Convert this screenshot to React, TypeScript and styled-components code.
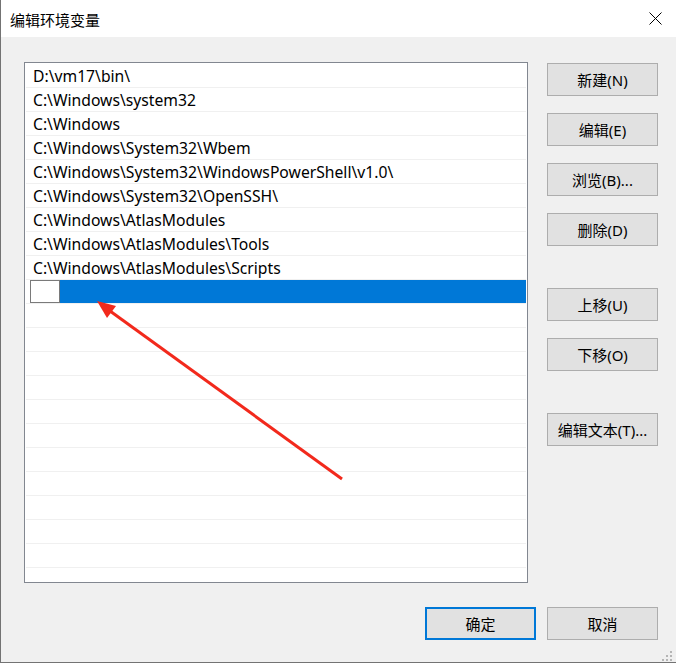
import React from "react";
import styled, { createGlobalStyle } from "styled-components";

const Global = createGlobalStyle`
  html, body { margin: 0; padding: 0; background: #f0f0f0; }
  body { font-family: "Noto Sans", "Noto Sans CJK SC", sans-serif; }
  * { box-sizing: border-box; }
`;

const Window = styled.div`
  position: relative;
  width: 676px;
  height: 663px;
  background: #f0f0f0;
  border-left: 1px solid #737373;
  border-bottom: 1px solid #737373;
  display: flex;
  flex-direction: column;
  overflow: hidden;
`;

const TitleBar = styled.div`
  height: 37px;
  background: #ffffff;
  display: flex;
  align-items: center;
  justify-content: space-between;
  padding-left: 9px;
  padding-right: 14px;
  flex: none;
`;

const Title = styled.div`
  font-family: "Noto Sans CJK SC", sans-serif;
  font-size: 15px;
  color: #000;
  line-height: 1;
  margin-top: 1px;
`;

const Body = styled.div`
  display: flex;
  flex-direction: column;
  padding: 25px 0 0 23px;
`;

const Main = styled.div`
  display: flex;
  gap: 19px;
  align-items: flex-start;
`;

const ListBox = styled.div`
  width: 504px;
  height: 521px;
  background: #ffffff;
  border: 1px solid #828790;
  padding-top: 1px;
  overflow: hidden;
  display: flex;
  flex-direction: column;
`;

const Row = styled.div<{ $selected?: boolean }>`
  height: 24px;
  flex: none;
  margin: 0 1px;
  border-bottom: 1px solid #f0f0f0;
  display: flex;
  align-items: center;
  padding-left: 7px;
  padding-top: 1px;
  font-size: 15.7px;
  color: #000;
  white-space: nowrap;
  ${(p) =>
    p.$selected &&
    `
    padding-left: 4px;
    padding-top: 0;
    align-items: stretch;
  `}
`;

const EditBox = styled.div`
  width: 30px;
  background: #fff;
  border: 1px solid #7a7a7a;
  flex: none;
`;

const SelFill = styled.div`
  flex: 1;
  background: #0078d7;
`;

const ButtonCol = styled.div`
  display: flex;
  flex-direction: column;
  padding-top: 1px;
  width: 111px;
`;

const Btn = styled.div<{ $gapTop?: number; $primary?: boolean }>`
  width: 111px;
  height: 33px;
  margin-top: ${(p) => p.$gapTop ?? 0}px;
  background: #e1e1e1;
  border: ${(p) => (p.$primary ? "2px solid #0078d7" : "1px solid #adadad")};
  display: flex;
  align-items: center;
  justify-content: center;
  font-size: 15px;
  color: #000;
  white-space: nowrap;
  padding-bottom: 1px;
`;

const Footer = styled.div`
  display: flex;
  justify-content: flex-end;
  gap: 11px;
  padding-right: 18px;
  margin-top: 24px;
`;

const Grip = styled.svg`
  position: absolute;
  right: 2px;
  bottom: 1px;
`;

const ArrowLayer = styled.svg`
  position: absolute;
  left: -1px;
  top: 0;
  pointer-events: none;
`;

const paths = [
  "D:\\vm17\\bin\\",
  "C:\\Windows\\system32",
  "C:\\Windows",
  "C:\\Windows\\System32\\Wbem",
  "C:\\Windows\\System32\\WindowsPowerShell\\v1.0\\",
  "C:\\Windows\\System32\\OpenSSH\\",
  "C:\\Windows\\AtlasModules",
  "C:\\Windows\\AtlasModules\\Tools",
  "C:\\Windows\\AtlasModules\\Scripts",
];

export default function App() {
  const empty = Array.from({ length: 12 });
  return (
    <>
      <Global />
      <Window>
        <TitleBar>
          <Title>编辑环境变量</Title>
          <svg width="13" height="13" viewBox="0 0 13 13">
            <path d="M0.5 0.5 L12.5 12.5 M12.5 0.5 L0.5 12.5" stroke="#000" strokeWidth="1" />
          </svg>
        </TitleBar>
        <Body>
          <Main>
            <ListBox>
              {paths.map((p) => (
                <Row key={p}>{p}</Row>
              ))}
              <Row $selected>
                <EditBox />
                <SelFill />
              </Row>
              {empty.map((_, i) => (
                <Row key={"e" + i} />
              ))}
            </ListBox>
            <ButtonCol>
              <Btn>新建(N)</Btn>
              <Btn $gapTop={17}>编辑(E)</Btn>
              <Btn $gapTop={17}>浏览(B)...</Btn>
              <Btn $gapTop={17}>删除(D)</Btn>
              <Btn $gapTop={42}>上移(U)</Btn>
              <Btn $gapTop={17}>下移(O)</Btn>
              <Btn $gapTop={42}>编辑文本(T)...</Btn>
            </ButtonCol>
          </Main>
          <Footer>
            <Btn $primary>确定</Btn>
            <Btn>取消</Btn>
          </Footer>
        </Body>
        <Grip width="12" height="10" viewBox="0 0 12 10">
          <g fill="#b5b5b5">
            <rect x="8" y="0" width="2" height="2" />
            <rect x="4" y="4" width="2" height="2" />
            <rect x="8" y="4" width="2" height="2" />
            <rect x="0" y="8" width="2" height="2" />
            <rect x="4" y="8" width="2" height="2" />
            <rect x="8" y="8" width="2" height="2" />
          </g>
        </Grip>
        <ArrowLayer width="676" height="663" viewBox="0 0 676 663">
          <line x1="342" y1="479" x2="110" y2="311" stroke="#f2291c" strokeWidth="3" />
          <polygon points="97,301 116,306 107,318" fill="#f2291c" />
        </ArrowLayer>
      </Window>
    </>
  );
}
